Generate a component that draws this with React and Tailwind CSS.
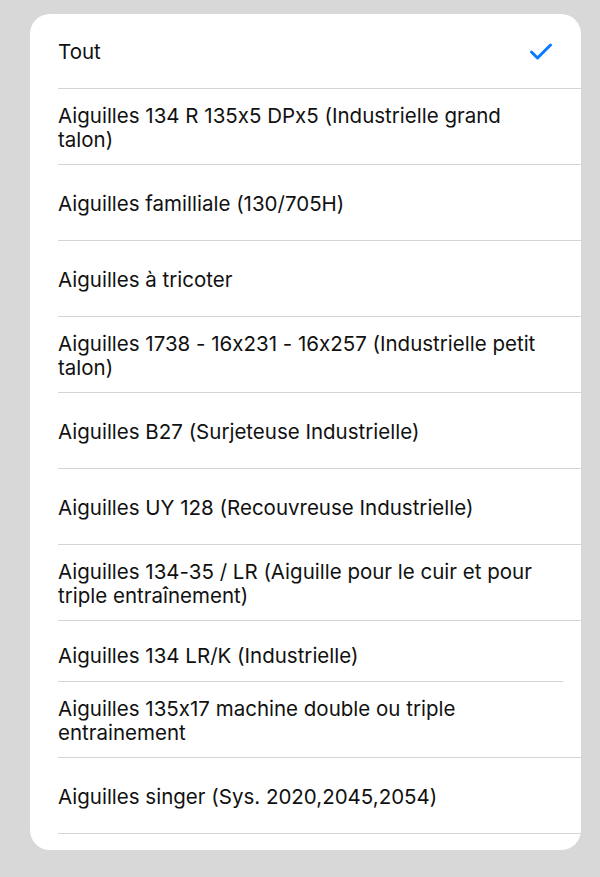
import React from 'react';

const items = [
  { label: 'Tout', checked: true },
  { label: 'Aiguilles 134 R 135x5 DPx5 (Industrielle grand talon)' },
  { label: 'Aiguilles familliale (130/705H)' },
  { label: 'Aiguilles à tricoter' },
  { label: 'Aiguilles 1738 - 16x231 - 16x257 (Industrielle petit talon)' },
  { label: 'Aiguilles B27 (Surjeteuse Industrielle)' },
  { label: 'Aiguilles UY 128 (Recouvreuse Industrielle)' },
  { label: 'Aiguilles 134-35 / LR (Aiguille pour le cuir et pour triple entraînement)' },
  { label: 'Aiguilles 134 LR/K (Industrielle)', short: true },
  { label: 'Aiguilles 135x17 machine double ou triple entrainement' },
  { label: 'Aiguilles singer (Sys. 2020,2045,2054)' },
];

const Check = () => (
  <svg width="24" height="19" viewBox="0 0 24 19" fill="none">
    <path d="M2.5 10 L8.5 16 L21.5 3" stroke="#0a7aff" strokeWidth="3" strokeLinecap="round" strokeLinejoin="round" />
  </svg>
);

export default function App() {
  return (
    <div className="min-h-[877px] w-[600px] bg-[#d8d8d8] pt-[14px] pl-[30px] font-['Inter','Liberation_Sans',sans-serif] [font-feature-settings:'calt'_0]">
      <div className="w-[551px] h-[836px] bg-white rounded-[20px] overflow-hidden flex flex-col">
        {items.map((item) => (
          <div key={item.label} className={`pl-[28px] ${item.short ? 'h-[61px]' : item.checked ? 'h-[75px]' : 'h-[76px]'}`}>
            <div className={`h-full flex items-center border-b border-[#d4d4d4] ${item.short ? 'mr-[18px] pr-[10px]' : 'pr-[28px]'}`}>
              <span className={`flex-1 text-[20.5px] leading-[24px] text-[#111] ${item.short ? 'pt-[10px]' : 'pt-[2px]'}`}>{item.label}</span>
              {item.checked && <Check />}
            </div>
          </div>
        ))}
      </div>
    </div>
  );
}
